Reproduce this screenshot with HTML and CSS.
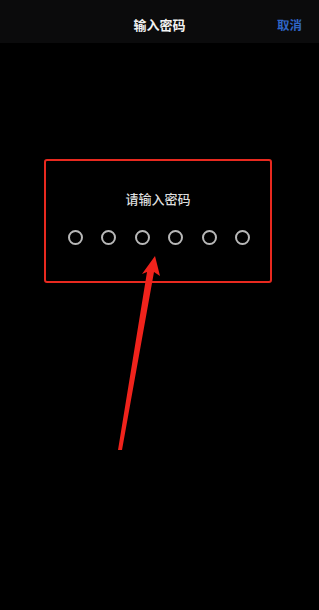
FILE: index.html
```html
<!DOCTYPE html>
<html lang="zh-CN">
<head>
  <meta charset="UTF-8" />
  <meta name="viewport" content="width=device-width, initial-scale=1.0"/>
  <title>输入密码</title>
  <link rel="stylesheet" href="styles.css">
</head>
<body>
  <div class="topbar">
    <span class="spacer"></span>
    <h1>输入密码</h1>
    <a class="cancel">取消</a>
  </div>

  <div class="content">
    <div class="pin-box">
      <h3>请输入密码</h3>
      <div class="dots">
        <span></span><span></span><span></span><span></span><span></span><span></span>
      </div>
    </div>
  </div>

  <!-- 标注箭头 -->
  <svg class="arrow" width="319" height="610" viewBox="0 0 319 610">
    <polygon points="118,450 147,272 142,274 155,256 160,276 154,272 122,450" fill="#f0231c"/>
  </svg>
</body>
</html>
```

FILE: styles.css
```css
body {
  margin: 0;
  background-color: #000;
  font-family: "Noto Sans CJK SC", "Noto Sans", sans-serif;
  width: 319px;
  height: 610px;
  position: relative;
  overflow: hidden;
}

.topbar {
  height: 43px;
  background-color: #0b0b0c;
  display: flex;
  align-items: center;
  justify-content: space-between;
  padding: 0 17px 0 0;
  box-sizing: border-box;
}

.topbar .spacer {
  width: 26px;
}

.topbar h1 {
  margin: 5px 0 0 16px;
  font-size: 13px;
  font-weight: bold;
  color: #f2f2f2;
}

.cancel {
  margin-top: 5px;
  font-size: 12.5px;
  font-weight: bold;
  color: #2f64c4;
}

.content {
  padding-top: 116px;
}

.pin-box {
  width: 228px;
  height: 124px;
  margin-left: 44px;
  border: 2.5px solid #e8291f;
  border-radius: 3px;
  box-sizing: border-box;
  text-align: center;
}

.pin-box h3 {
  margin: 28px 0 0;
  font-size: 13px;
  font-weight: 500;
  color: #dedede;
  line-height: 20px;
}

.dots {
  display: flex;
  justify-content: center;
  gap: 18.6px;
  margin-top: 21px;
  padding-left: 2px;
}

.dots span {
  width: 15px;
  height: 15px;
  border: 2px solid #b8b8b8;
  border-radius: 50%;
  box-sizing: border-box;
}

.arrow {
  position: absolute;
  left: 0;
  top: 0;
}
```
